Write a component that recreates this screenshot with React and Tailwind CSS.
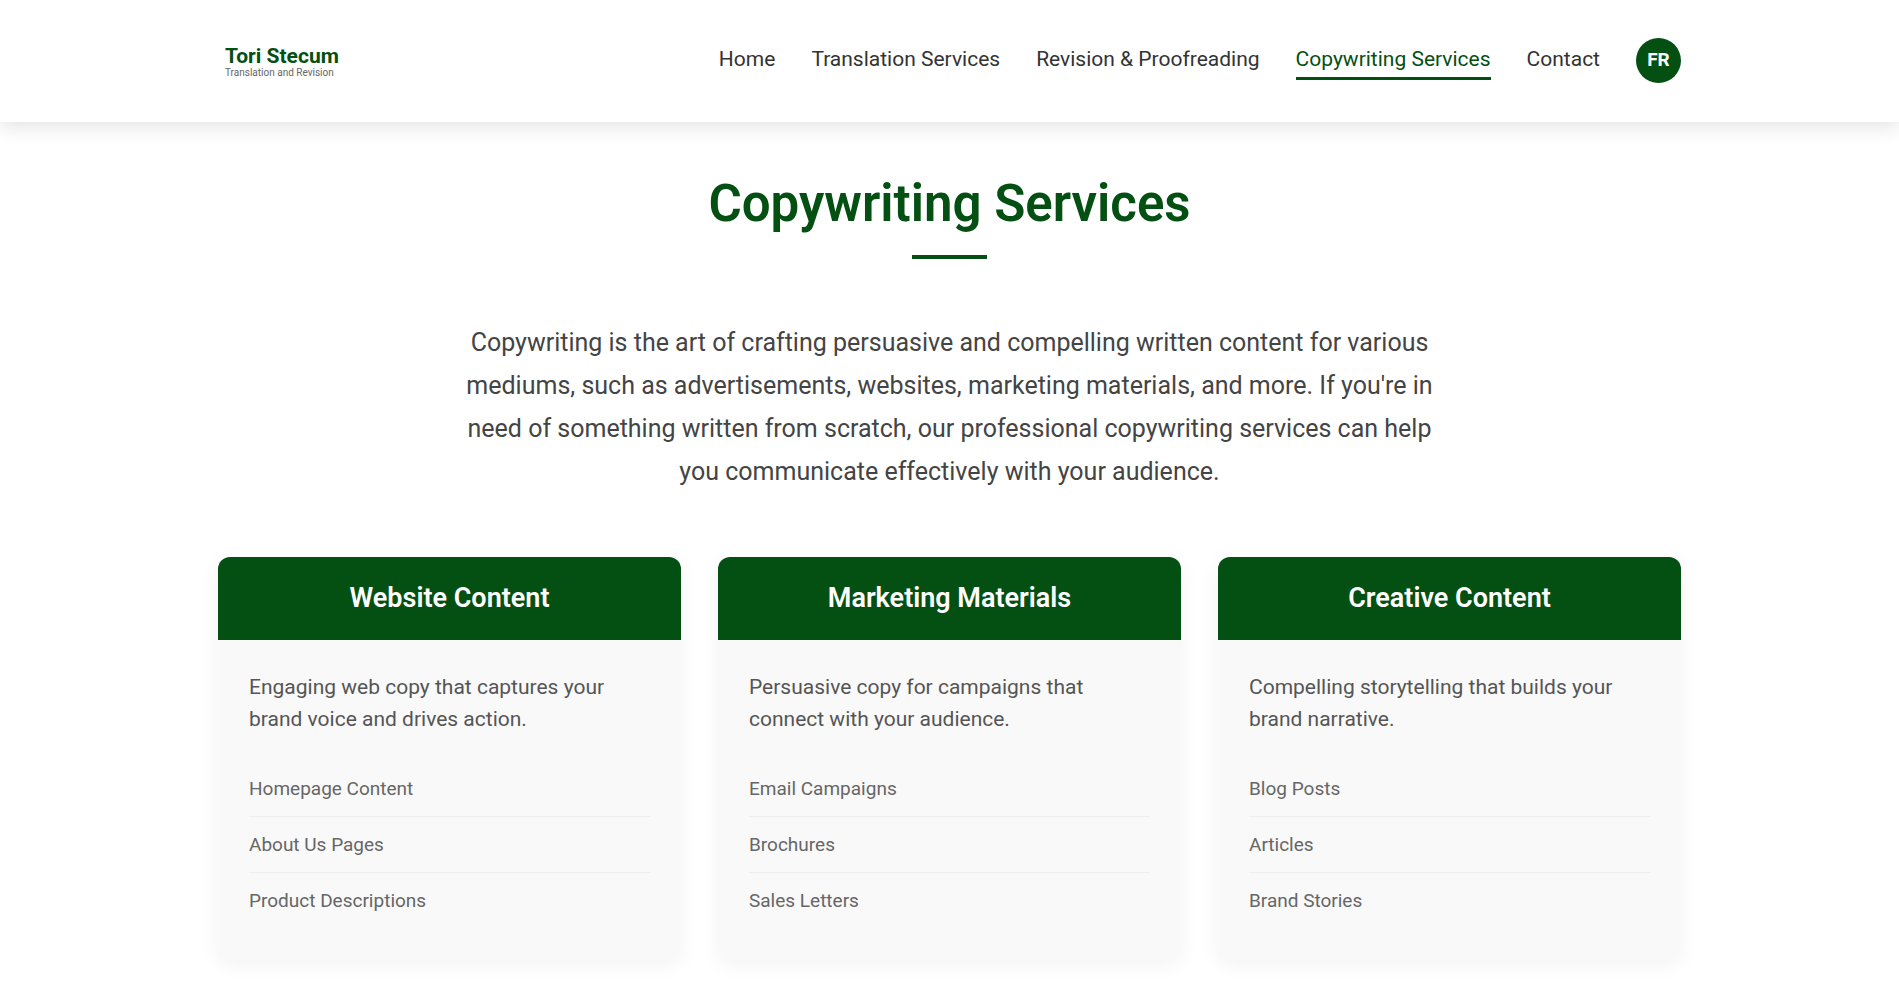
const navLinks = [
  { label: "Home" },
  { label: "Translation Services" },
  { label: "Revision & Proofreading" },
  { label: "Copywriting Services", active: true },
  { label: "Contact" },
];

const services = [
  {
    title: "Website Content",
    text: "Engaging web copy that captures your brand voice and drives action.",
    items: ["Homepage Content", "About Us Pages", "Product Descriptions"],
  },
  {
    title: "Marketing Materials",
    text: "Persuasive copy for campaigns that connect with your audience.",
    items: ["Email Campaigns", "Brochures", "Sales Letters"],
  },
  {
    title: "Creative Content",
    text: "Compelling storytelling that builds your brand narrative.",
    items: ["Blog Posts", "Articles", "Brand Stories"],
  },
];

function NavLink({ label, active }) {
  const base = "border-b-3 py-1.5 text-[21px] leading-6 whitespace-nowrap";
  const tone = active
    ? "border-[#045012] text-[#045012]"
    : "border-transparent text-[#333333]";
  return (
    <a href="#" aria-current={active ? "page" : undefined} className={`${base} ${tone}`}>
      {label}
    </a>
  );
}

function Header() {
  return (
    <header className="relative bg-white shadow-[0_4px_20px_rgba(0,0,0,0.12)]">
      <div className="mx-auto flex min-h-[122px] max-w-[1463px] items-center justify-between pb-px">
        <a href="#" className="flex flex-col pt-[3px] pl-[7px]">
          <span className="text-[21px] leading-[22px] font-bold text-[#045012]">Tori Stecum</span>
          <span className="text-[10px] leading-3 text-[#666666]">Translation and Revision</span>
        </a>
        <nav className="flex items-center gap-9">
          {navLinks.map((link) => (
            <NavLink key={link.label} {...link} />
          ))}
          <button
            type="button"
            className="flex size-[45px] items-center justify-center rounded-full bg-[#045012] text-[19px] font-bold text-white"
          >
            FR
          </button>
        </nav>
      </div>
    </header>
  );
}

function ServiceCard({ title, text, items }) {
  return (
    <article className="overflow-hidden rounded-xl bg-[#f9f9f9] shadow-[0_5px_20px_rgba(0,0,0,0.05)]">
      <h2 className="bg-[#045012] px-8 py-6 text-center text-[27px] leading-[35px] font-semibold text-white">
        {title}
      </h2>
      <div className="px-[31px] pt-[31px] pb-8">
        <p className="text-[21px] leading-8 text-[#555555]">{text}</p>
        <ul className="mt-[26px]">
          {items.map((item) => (
            <li
              key={item}
              className="border-b border-[#eeeeee] py-3 text-[19px] leading-[31px] text-[#666666] last:border-b-0"
            >
              {item}
            </li>
          ))}
        </ul>
      </div>
    </article>
  );
}

export default function App() {
  return (
    <div className="min-h-screen bg-white font-['Roboto',sans-serif]">
      <Header />
      <main className="mx-auto max-w-[1463px] pt-[50px] pb-5">
        <h1 className="text-center text-[51px] leading-[64px] font-semibold text-[#045012]">
          Copywriting Services
        </h1>
        <div className="mx-auto mt-[19px] h-1 w-[75px] bg-[#045012]" />
        <p className="mx-auto mt-[62px] max-w-[975px] text-center text-[25px] leading-[43px] text-[#444444]">
          Copywriting is the art of crafting persuasive and compelling written content for various
          mediums, such as advertisements, websites, marketing materials, and more. If you're in
          need of something written from scratch, our professional copywriting services can help
          you communicate effectively with your audience.
        </p>
        <section className="mt-16 grid grid-cols-3 gap-[37px]">
          {services.map((service) => (
            <ServiceCard key={service.title} {...service} />
          ))}
        </section>
      </main>
    </div>
  );
}
